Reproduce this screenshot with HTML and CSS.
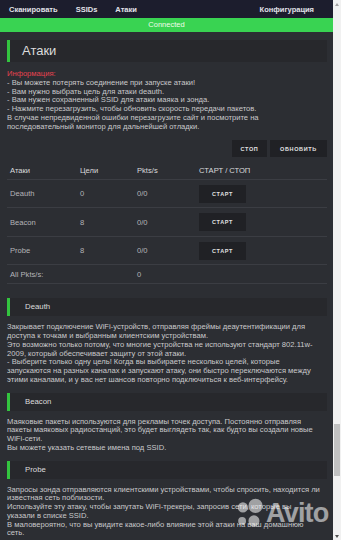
FILE: index.html
```html
<!DOCTYPE html>
<html lang="ru">
<head>
<meta charset="utf-8">
<title>Атаки</title>
<link rel="stylesheet" href="styles.css">
</head>
<body>
<div class="page">
  <div class="main">
    <nav class="nav">
      <span class="nav-item">Сканировать</span>
      <span class="nav-item">SSIDs</span>
      <span class="nav-item">Атаки</span>
      <span class="nav-item nav-right">Конфигурация</span>
    </nav>
    <div class="status">Connected</div>
    <div class="content">
      <div class="title-box">Атаки</div>
      <p class="info"><span class="red">Информация:</span><br>
      - Вы можете потерять соединение при запуске атаки!<br>
      - Вам нужно выбрать цель для атаки deauth.<br>
      - Вам нужен сохраненный SSID для атаки маяка и зонда.<br>
      - Нажмите перезагрузить, чтобы обновить скорость передачи пакетов.<br>
      В случае непредвиденной ошибки перезагрузите сайт и посмотрите на<br>
      последовательный монитор для дальнейшей отладки.</p>
      <div class="actions">
        <button class="btn btn-stop">СТОП</button>
        <button class="btn btn-reload">ОБНОВИТЬ</button>
      </div>
      <div class="table">
        <div class="row row-head"><span>Атаки</span><span>Цели</span><span>Pkts/s</span><span>СТАРТ / СТОП</span></div>
        <div class="row row-a"><span>Deauth</span><span>0</span><span>0/0</span><span><button class="btn btn-start">СТАРТ</button></span></div>
        <div class="row row-b"><span>Beacon</span><span>8</span><span>0/0</span><span><button class="btn btn-start">СТАРТ</button></span></div>
        <div class="row row-a"><span>Probe</span><span>8</span><span>0/0</span><span><button class="btn btn-start">СТАРТ</button></span></div>
        <div class="row row-all"><span>All Pkts/s:</span><span></span><span>0</span><span></span></div>
      </div>

      <div class="sub-box sub-first">Deauth</div>
      <p class="desc">Закрывает подключение WiFi-устройств, отправляя фреймы деаутентификации для<br>
      доступа к точкам и выбранным клиентским устройствам.<br>
      Это возможно только потому, что многие устройства не используют стандарт 802.11w-<br>
      2009, который обеспечивает защиту от этой атаки.<br>
      - Выберите только одну цель! Когда вы выбираете несколько целей, которые<br>
      запускаются на разных каналах и запускают атаку, они быстро переключаются между<br>
      этими каналами, и у вас нет шансов повторно подключиться к веб-интерфейсу.</p>

      <div class="sub-box">Beacon</div>
      <p class="desc">Маяковые пакеты используются для рекламы точек доступа. Постоянно отправляя<br>
      пакеты маяковых радиостанций, это будет выглядеть так, как будто вы создали новые<br>
      WiFi-сети.<br>
      Вы можете указать сетевые имена под SSID.</p>

      <div class="sub-box">Probe</div>
      <p class="desc">Запросы зонда отправляются клиентскими устройствами, чтобы спросить, находится ли<br>
      известная сеть поблизости.<br>
      Используйте эту атаку, чтобы запутать WiFi-трекеры, запросив сети, которые вы<br>
      указали в списке SSID.<br>
      В маловероятно, что вы увидите какое-либо влияние этой атаки на ваш домашнюю<br>
      сеть.</p>
    </div>
    <div class="watermark">
      <svg class="wm-dots" width="30" height="32" viewBox="0 0 38 40">
        <circle cx="10" cy="13" r="6.5" fill="#fff"/>
        <circle cx="26" cy="11" r="9" fill="#fff"/>
        <circle cx="9" cy="30" r="5" fill="#fff"/>
        <circle cx="24" cy="30" r="7" fill="#fff"/>
      </svg>
      <span class="wm-text">Avito</span>
    </div>
  </div>
  <div class="scrollbar">
    <span class="arrow arrow-up"></span>
    <span class="track"><span class="thumb"></span></span>
    <span class="arrow arrow-down"></span>
  </div>
</div>
</body>
</html>
```

FILE: styles.css
```css
* { box-sizing: border-box; }
html, body {
  margin: 0;
  padding: 0;
  width: 341px;
  height: 540px;
  overflow: hidden;
  background: #2c2e33;
  font-family: "Liberation Sans", Arial, sans-serif;
}
.page {
  display: grid;
  grid-template-columns: 333px 8px;
  height: 540px;
}
.main {
  position: relative;
  overflow: hidden;
  background: #2c2e33;
}
.nav {
  height: 18px;
  background: #1c1d2d;
  display: flex;
  align-items: center;
  gap: 18px;
  padding: 0 19px 0 9px;
}
.nav-item {
  color: #e2e2ea;
  font-size: 7.5px;
  font-weight: bold;
}
.nav-right { margin-left: auto; }
.status {
  height: 14px;
  background: #39d352;
  color: #eefbe9;
  font-size: 7.5px;
  line-height: 14px;
  text-align: center;
}
.content {
  padding: 0 6px 0 7px;
}
.title-box {
  margin-top: 8px;
  height: 22px;
  background: #27282c;
  border-left: 3px solid #33c43f;
  color: #dcdcdc;
  font-size: 13px;
  line-height: 22px;
  padding-left: 12px;
}
.info, .desc {
  margin: 0;
  color: #c9c9cb;
  font-size: 7.6px;
  line-height: 8.75px;
  white-space: nowrap;
}
.info { margin-top: 8px; }
.red { color: #e6424f; }
.actions {
  display: flex;
  justify-content: flex-end;
  gap: 3px;
  margin-top: 9px;
}
.btn {
  border: none;
  margin: 0;
  padding: 0;
  background: #202125;
  color: #e2e2e2;
  font-family: "Liberation Sans", Arial, sans-serif;
  font-weight: bold;
  font-size: 5.5px;
  letter-spacing: 0.65px;
  height: 17px;
}
.btn-stop { width: 35px; }
.btn-reload { width: 57px; }
.btn-start { width: 47px; height: 18px; }
.table { margin-top: 4px; }
.row {
  display: grid;
  grid-template-columns: 73px 57px 62px 1fr;
  align-items: center;
  border-bottom: 1px solid #3b3d43;
  font-size: 7.6px;
  color: #b4b4b8;
}
.row > span:first-child { padding-left: 3px; }
.row-head { height: 19px; color: #dadadc; }
.row-a { height: 28px; }
.row-b { height: 29px; }
.row-all { height: 19px; }
.sub-box {
  margin-top: 8px;
  height: 18px;
  background: #27282c;
  border-left: 3px solid #33c43f;
  color: #dcdcdc;
  font-size: 7.8px;
  line-height: 18px;
  padding-left: 15px;
}
.sub-first { margin-top: 14px; }
.desc { margin-top: 7px; }
.watermark {
  position: absolute;
  left: 235px;
  top: 497px;
  display: flex;
  align-items: center;
  gap: 1px;
  opacity: 0.55;
}
.wm-text {
  color: #ffffff;
  font-family: "Liberation Sans", Arial, sans-serif;
  font-weight: bold;
  font-size: 27px;
  line-height: 30px;
  letter-spacing: -0.8px;
}
.scrollbar {
  display: flex;
  flex-direction: column;
  background: #f1f1f1;
  height: 540px;
}
.arrow {
  height: 8px;
  display: flex;
  justify-content: center;
  align-items: center;
}
.arrow-up::before {
  content: "";
  border-left: 2.5px solid transparent;
  border-right: 2.5px solid transparent;
  border-bottom: 3px solid #a3a3a3;
}
.arrow-down::before {
  content: "";
  border-left: 2.5px solid transparent;
  border-right: 2.5px solid transparent;
  border-top: 3px solid #505050;
}
.track {
  flex: 1;
  display: flex;
  flex-direction: column;
  justify-content: flex-end;
  padding: 0 1px;
}
.thumb {
  display: block;
  height: 52px;
  margin-bottom: 56px;
  background: #c1c1c1;
}
```
